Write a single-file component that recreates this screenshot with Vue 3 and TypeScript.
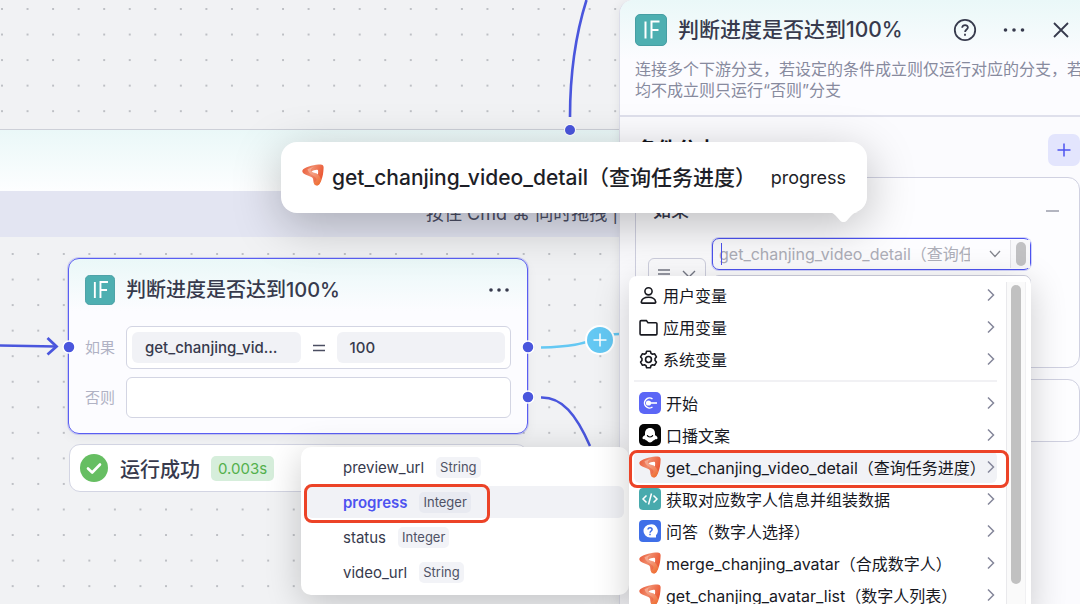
<script setup lang="ts">
import { ref } from 'vue'

interface MenuItem {
  label: string
  icon: 'user' | 'folder' | 'gear' | 'start' | 'copy' | 'plugin' | 'code' | 'ask'
  active?: boolean
}

interface Field {
  name: string
  type: string
}

const scopes: MenuItem[] = [
  { label: '用户变量', icon: 'user' },
  { label: '应用变量', icon: 'folder' },
  { label: '系统变量', icon: 'gear' },
]

const sources: MenuItem[] = [
  { label: '开始', icon: 'start' },
  { label: '口播文案', icon: 'copy' },
  { label: 'get_chanjing_video_detail（查询任务进度）', icon: 'plugin', active: true },
  { label: '获取对应数字人信息并组装数据', icon: 'code' },
  { label: '问答（数字人选择）', icon: 'ask' },
  { label: 'merge_chanjing_avatar（合成数字人）', icon: 'plugin' },
  { label: 'get_chanjing_avatar_list（数字人列表）', icon: 'plugin' },
]

const fields: Field[] = [
  { name: 'preview_url', type: 'String' },
  { name: 'progress', type: 'Integer' },
  { name: 'status', type: 'Integer' },
  { name: 'video_url', type: 'String' },
]

const selected = ref('progress')
</script>

<template>
  <div class="page">
    <svg class="defs" width="0" height="0" aria-hidden="true">
      <defs>
        <linearGradient id="plugA" x1="0" y1="0" x2="1" y2="0.4">
          <stop offset="0" stop-color="#e95735" />
          <stop offset="0.5" stop-color="#f08a6a" />
          <stop offset="1" stop-color="#eb5733" />
        </linearGradient>
        <linearGradient id="plugB" x1="0" y1="0" x2="0.5" y2="1">
          <stop offset="0" stop-color="#f8b9a4" />
          <stop offset="0.5" stop-color="#f4a084" />
          <stop offset="1" stop-color="#f07a3c" />
        </linearGradient>
        <symbol id="plugin" viewBox="0 0 22 22">
          <path d="M1.200 5.200C5 2.200 13 .5 18.500.5c2.400 0 3.300 1.200 3.100 3.500-.2 4.500-.8 8.500-2.200 12-1 2.600-2.200 5.400-4.300 5.400-2.600 0-3.600-2-3.800-4.600-.1-2.200-.6-3.200-2-3.800L3.300 10.600C.4 9.500-.6 6.800 1.200 5.200Z" fill="url(#plugA)" />
          <path d="M5.500 5.200c3-1.500 6-2.200 6-2.200-2 1.200-3 2.600-2.500 4 1.800 1.200 8.500 2 10.300 9-1 2.600-2.200 5.400-4.200 5.400-2.600 0-3.200-1.600-3.300-3 3-1.200 3.400-3.200 1.700-5C11.500 11.300 6.500 9.800 5.500 5.200Z" fill="url(#plugB)" opacity="0.8" />
          <path d="M9.600 7.500c1.500-1.300 5-2.100 6.200-1.500.6.600.4 2.900.1 4.400-1.300-1.300-4.300-1.400-6.300-2.900Z" fill="#fff" />
        </symbol>
      </defs>
    </svg>

    <main class="canvas">
      <svg class="dots" aria-hidden="true">
        <defs>
          <pattern id="grid" x="1" y="8" width="25.55" height="25.55" patternUnits="userSpaceOnUse">
            <circle cx="1" cy="1" r="0.900" fill="#a6a8ae" />
          </pattern>
        </defs>
        <rect width="100%" height="100%" fill="url(#grid)" />
      </svg>

      <section class="loop">
        <div class="loop-head"></div>
        <div class="loop-tip">按住 Cmd ⌘ 同时拖拽 |</div>
        <svg class="loop-body" aria-hidden="true">
          <defs>
            <pattern id="grid2" x="11.700" y="16" width="25.55" height="25.55" patternUnits="userSpaceOnUse">
              <circle cx="1" cy="1" r="0.900" fill="#a6a8ae" />
            </pattern>
          </defs>
          <rect width="100%" height="100%" fill="url(#grid2)" />
        </svg>
      </section>

      <svg class="edges" width="640" height="604" viewBox="0 0 640 604" fill="none" aria-hidden="true">
        <path d="M586.500 0C577 30 570 70 570 117" stroke="#4a56dd" stroke-width="2.600" />
        <circle cx="570" cy="130" r="6" fill="#fff" />
        <circle cx="570" cy="130" r="5" fill="#4a56dd" />
        <path d="M0 345.500 56 346.500" stroke="#4a56dd" stroke-width="2.500" />
        <path d="m47.500 338 9 8.500-9 8" stroke="#4a56dd" stroke-width="2.800" />
        <path d="M541 347.500C574 347 584 343 596 339S612 334 619 334" stroke="#64c8f3" stroke-width="2.500" />
        <path d="M541 397.500C562 397 576 414 590 446" stroke="#4a56dd" stroke-width="2.500" />
        <circle cx="600" cy="340" r="15" fill="#fff" />
        <circle cx="600" cy="340" r="13" fill="#64c8f3" />
        <path d="M593.500 340h13M600 333.500v13" stroke="#fff" stroke-width="1.500" />
      </svg>

      <div class="node-stack">
        <article class="node">
          <header class="node-head">
            <svg class="if-icon" viewBox="0 0 32 32" fill="none" aria-hidden="true">
              <rect x="0.500" y="0.500" width="31" height="31" rx="4.500" fill="#4eafb1" stroke="#479ea3" />
              <path d="M10.500 7.500v17M16.500 24.500v-17h8M16.500 16h7" stroke="#fff" stroke-width="2" />
            </svg>
            <h2>判断进度是否达到100%</h2>
            <button class="icon-btn" type="button" aria-label="更多">
              <svg width="22" height="6" viewBox="0 0 22 6" fill="#373a4d"><circle cx="3" cy="3" r="1.800" /><circle cx="11" cy="3" r="1.800" /><circle cx="19" cy="3" r="1.800" /></svg>
            </button>
          </header>
          <div class="branch">
            <span class="branch-name">如果</span>
            <div class="branch-box">
              <span class="pill">get_chanjing_vid…</span>
              <svg class="eq" width="12" height="8" viewBox="0 0 12 8" stroke="#4b4e62" stroke-width="1.300" aria-hidden="true"><path d="M0 1.500h12M0 6.500h12" /></svg>
              <span class="pill">100</span>
            </div>
          </div>
          <div class="branch">
            <span class="branch-name">否则</span>
            <div class="branch-box"></div>
          </div>
          <svg class="ports" width="472" height="176" viewBox="0 0 472 176" aria-hidden="true">
            <g fill="#4a56dd" stroke="#fff" stroke-width="1.500">
              <circle cx="7" cy="89" r="6" /><circle cx="466" cy="89" r="6" /><circle cx="466" cy="139" r="6" />
            </g>
          </svg>
        </article>
        <div class="result">
          <svg width="28" height="28" viewBox="0 0 28 28" fill="none" aria-hidden="true">
            <circle cx="14" cy="14" r="14" fill="#66be62" />
            <path d="m8 14.500 4.200 4 7.800-8" stroke="#fff" stroke-width="2.600" stroke-linecap="round" stroke-linejoin="round" />
          </svg>
          <strong>运行成功</strong>
          <span class="time">0.003s</span>
        </div>
      </div>
    </main>

    <aside class="panel">
      <div class="sheet">
        <header class="panel-head">
          <div class="title-row">
            <svg class="if-icon" viewBox="0 0 32 32" fill="none" aria-hidden="true">
              <rect x="0.500" y="0.500" width="31" height="31" rx="4.500" fill="#4eafb1" stroke="#479ea3" />
              <path d="M10.500 7.500v17M16.500 24.500v-17h8M16.500 16h7" stroke="#fff" stroke-width="2" />
            </svg>
            <h1>判断进度是否达到100%</h1>
            <div class="actions">
              <button class="icon-btn" type="button" aria-label="帮助">
                <svg width="24" height="24" viewBox="0 0 24 24" fill="none" stroke="#373a4d" stroke-width="1.800">
                  <circle cx="12" cy="12" r="10.200" />
                  <path d="M9.200 9.800c0-3.800 5.800-3.500 5.700-.2 0 2-2.800 2-2.800 4.400" /><path d="M12 15.800v2" />
                </svg>
              </button>
              <button class="icon-btn" type="button" aria-label="更多">
                <svg width="22" height="6" viewBox="0 0 22 6" fill="#373a4d"><circle cx="2.500" cy="3" r="1.800" /><circle cx="11" cy="3" r="1.800" /><circle cx="19.500" cy="3" r="1.800" /></svg>
              </button>
              <button class="icon-btn" type="button" aria-label="关闭">
                <svg width="16" height="16" viewBox="0 0 16 16" fill="none" stroke="#373a4d" stroke-width="1.800"><path d="m1 1 14 14M15 1 1 15" /></svg>
              </button>
            </div>
          </div>
          <p>连接多个下游分支，若设定的条件成立则仅运行对应的分支，若<br />均不成立则只运行“否则”分支</p>
        </header>

        <div class="section-head">
          <h3>条件分支</h3>
          <button class="add" type="button" aria-label="添加分支">
            <svg width="14" height="14" viewBox="0 0 14 14" stroke="#4d53f0" stroke-width="1.500"><path d="M7 0.500v13M0.500 7h13" /></svg>
          </button>
        </div>

        <section class="card first">
          <div class="card-head">
            <h4>如果</h4>
            <button class="icon-btn" type="button" aria-label="删除条件">
              <svg width="13" height="2" viewBox="0 0 13 2"><path d="M0 1h13" stroke="#9a9cab" stroke-width="1.500" /></svg>
            </button>
          </div>
          <div class="cond">
            <button class="operator" type="button" aria-label="等于">
              <svg width="42" height="12" viewBox="0 0 42 12" fill="none" stroke="#777a87" stroke-width="1.400"><path d="M2 2h12M2 6h12M2 10h12M27 3l6 6 6-6" /></svg>
            </button>
            <div class="operands">
              <label class="combo">
                <input type="text" aria-label="引用变量" placeholder="get_chanjing_video_detail（查询任务进度）" />
                <svg width="12" height="8" viewBox="0 0 12 8" fill="none" stroke="#85878f" stroke-width="1.300" aria-hidden="true"><path d="m1 1 5 5.500L11 1" /></svg>
                <span class="caret"></span>
                <span class="mini-track"><span class="mini-thumb"></span></span>
              </label>
              <div class="value-box"></div>
            </div>
          </div>
        </section>
        <section class="card second"></section>
      </div>

      <div class="submenu">
        <button
          v-for="f in fields"
          :key="f.name"
          type="button"
          class="field"
          :class="{ on: f.name === selected }"
          @click="selected = f.name"
        >
          <span>{{ f.name }}</span>
          <span class="tag">{{ f.type }}</span>
        </button>
        <span class="mark field-mark"></span>
      </div>

      <div class="menu">
        <div class="menu-list">
          <button v-for="s in scopes" :key="s.label" type="button" class="item scope">
            <svg v-if="s.icon === 'user'" class="line" viewBox="0 0 18 18"><circle cx="9" cy="5" r="3.400" /><path d="M3 16.200c-.6 0-1-.4-.8-1C2.600 12.200 5 10.600 9 10.600s6.400 1.600 6.800 4.600c.2.600-.2 1-.8 1Z" /></svg>
            <svg v-else-if="s.icon === 'folder'" class="line" viewBox="0 0 18 18"><path d="M1 3.500c0-.6.300-1 1-1h5l1.500 2H16c.6 0 1 .4 1 1v9.500c0 .6-.4 1-1 1H2c-.6 0-1-.4-1-1Z" /></svg>
            <svg v-else class="line" viewBox="0 0 18 18"><circle cx="9" cy="9" r="2.800" /><path d="m7.200 1.200-.5 1.900-1.500.9-1.900-.5L1.500 6.600l1.300 1.500v1.800l-1.300 1.500 1.800 3.100 1.900-.5 1.500.9.500 1.900h3.600l.5-1.900 1.500-.9 1.900.5 1.800-3.100-1.300-1.500V8.100l1.300-1.500-1.800-3.100-1.900.5-1.500-.9-.5-1.900Z" stroke-linejoin="round" /></svg>
            <span class="label">{{ s.label }}</span>
            <svg class="chev" viewBox="0 0 8 14"><path d="m1 1.500 5.500 5.500L1 12.500" /></svg>
          </button>
          <hr />
          <button v-for="s in sources" :key="s.label" type="button" class="item" :class="{ active: s.active }">
            <svg v-if="s.icon === 'start'" class="pic" viewBox="0 0 22 22" fill="none"><rect width="22" height="22" rx="5" fill="#5b66f6" /><path d="M13.500 7A5 5 0 1 0 13.500 15" stroke="#fff" stroke-width="1.500" /><circle cx="9.500" cy="11" r="2.600" fill="#fff" /><path d="M10 11h8" stroke="#fff" stroke-width="1.600" /></svg>
            <svg v-else-if="s.icon === 'copy'" class="pic" viewBox="0 0 22 22" fill="none"><rect width="22" height="22" rx="5" fill="#050505" /><path d="M11 4c3.300 0 5 2.400 5 5.600v1.600c1.500.6 2.600 1.700 2.500 3-.1 1-1.300 1.200-2.500 1-.4 1.300-1.500 1-2.300 1.800-.6.700-1.400 1.400-2.700 1.400s-2.100-.7-2.700-1.400C7.500 16.200 6.400 16.500 6 15.200c-1.200.2-2.400 0-2.500-1-.1-1.300 1-2.400 2.500-3V9.600C6 6.400 7.700 4 11 4Z" fill="#fff" /><path d="M8.200 11.200c.7 2.400 4.900 2.400 5.600 0" stroke="#050505" stroke-width="1.200" /></svg>
            <svg v-else-if="s.icon === 'code'" class="pic" viewBox="0 0 22 22" fill="none" stroke="#fff" stroke-width="1.500"><rect width="22" height="22" rx="4" fill="#48aaad" stroke="none" /><path d="m7.500 7.500-3.500 3.500 3.500 3.500M14.500 7.500l3.500 3.500-3.500 3.500M12.500 5.500l-3 11" /></svg>
            <svg v-else-if="s.icon === 'ask'" class="pic" viewBox="0 0 22 22" fill="none"><rect width="22" height="22" rx="4" fill="#3f6fe8" /><path d="M11 4.500a6.500 6.500 0 1 0 0 13h6v-2.200A6.500 6.500 0 0 0 11 4.500Z" fill="#fff" /><path d="M9 9.600c0-2.700 4.100-2.500 4.100 0 0 1.400-2 1.500-2 3.100M11 13.700v1.500" stroke="#3f6fe8" stroke-width="1.500" /></svg>
            <svg v-else class="pic"><use href="#plugin" /></svg>
            <span class="label">{{ s.label }}</span>
            <svg class="chev" viewBox="0 0 8 14"><path d="m1 1.500 5.500 5.500L1 12.500" /></svg>
          </button>
        </div>
        <div class="track"><div class="thumb"></div></div>
        <span class="mark item-mark"></span>
      </div>

      <div class="tooltip" role="tooltip">
        <svg class="tip-logo"><use href="#plugin" /></svg>
        <strong>get_chanjing_video_detail（查询任务进度）</strong>
        <span>progress</span>
        <svg class="arrow" width="34" height="11" viewBox="0 0 34 11" aria-hidden="true"><path d="M0 0h34c-6 0-8 2.500-13 8.500-2 2-5 2-7 0C9 2.500 7 0 0 0Z" fill="#fff" /></svg>
      </div>
    </aside>
  </div>
</template>

<style>
body {
  margin: 0;
}
</style>

<style scoped>
.page {
  position: relative;
  display: flex;
  height: 100vh;
  overflow: hidden;
  background: #f1f2f4;
  color: #373a4d;
  font-family: Inter, "Noto Sans CJK SC", sans-serif;
}
* {
  box-sizing: border-box;
}
h1, h2, h3, h4, p {
  margin: 0;
}
button {
  font: inherit;
  color: inherit;
  border: 0;
  background: none;
  padding: 0;
  cursor: pointer;
}
svg {
  display: block;
  flex: none;
}
.defs {
  position: absolute;
}
.icon-btn {
  display: flex;
}

/* canvas */
.canvas {
  position: relative;
  flex: 1;
  min-width: 0;
}
.dots, .edges {
  position: absolute;
  left: 0;
  top: 0;
}
.dots {
  width: 100%;
  height: 100%;
}
.loop {
  position: absolute;
  left: 0;
  right: 0;
  top: 129px;
  bottom: 0;
  display: flex;
  flex-direction: column;
  border-top: 1px solid #cdd0d8;
  background: #f1f2f4;
}
.loop-head {
  height: 61px;
  background: linear-gradient(#eaf8f8, #fdfeff);
}
.loop-tip {
  height: 46px;
  padding-left: 426px;
  line-height: 46px;
  background: #e3e5f2;
  color: #4c4f66;
  font-size: 18px;
  white-space: nowrap;
}
.loop-body {
  width: 100%;
  flex: 1;
}
.node-stack {
  position: absolute;
  left: 68px;
  top: 258px;
  width: 460px;
  display: flex;
  flex-direction: column;
  gap: 10px;
}
.node {
  position: relative;
  height: 176px;
  padding: 15px 16px;
  display: flex;
  flex-direction: column;
  gap: 8px;
  border: 1px solid #5a5ef2;
  border-radius: 11px;
  background: linear-gradient(#eaf8f8, #fcfcff 52px);
  box-shadow: 0 0 0 1px rgba(90, 94, 242, 0.25), 0 4px 12px rgba(0, 0, 0, 0.05);
}
.node-head {
  display: flex;
  align-items: center;
  height: 32px;
  margin-bottom: 12px;
  padding-right: 1px;
}
.if-icon {
  width: 32px;
  height: 32px;
}
.node-head .if-icon {
  width: 30px;
  height: 30px;
}
h2 {
  flex: 1;
  margin-left: 11px;
  font-size: 20px;
  line-height: 30px;
  font-weight: 500;
}
.branch {
  display: flex;
  align-items: center;
}
.branch-name {
  width: 41px;
  font-size: 15px;
  line-height: 22px;
  color: #b0b2c4;
}
.branch-box {
  flex: 1;
  display: flex;
  align-items: center;
  gap: 12px;
  min-height: 41px;
  padding: 5px;
  border: 1px solid #d3d5e3;
  border-radius: 6px;
  background: #fff;
}
.pill {
  flex: 1;
  padding-left: 13px;
  border-radius: 6px;
  background: #f1f2f6;
  font-size: 15px;
  line-height: 31px;
  font-weight: 500;
  white-space: nowrap;
}
.ports {
  position: absolute;
  left: -7px;
  top: -1px;
}
.result {
  display: flex;
  align-items: center;
  height: 48px;
  margin-left: 1px;
  padding-left: 10px;
  border: 1px solid #d3d5e3;
  border-radius: 11px;
  background: #fff;
}
.result strong {
  margin-left: 12px;
  font-size: 20px;
  font-weight: 500;
}
.time {
  margin-left: 11px;
  padding: 0 7px;
  border-radius: 5px;
  background: #d6eedb;
  color: #53b04c;
  font-size: 15px;
  line-height: 25px;
}

/* right panel */
.panel {
  position: relative;
  flex: 0 0 461px;
  min-width: 0;
}
.sheet {
  height: 100%;
  border-left: 1px solid #dcdde9;
  border-radius: 14px 0 0 0;
  background: #fbfbfe;
  box-shadow: -2px 0 10px rgba(0, 0, 0, 0.05);
  overflow: hidden;
}
.panel-head {
  height: 117px;
  padding: 14px 11px 0 15px;
  border-bottom: 2px solid #dfe0ec;
  background: linear-gradient(#eaf8f8, #fcfcff 60px);
}
.title-row {
  display: flex;
  align-items: center;
}
h1 {
  margin-left: 11px;
  font-size: 21px;
  line-height: 32px;
  font-weight: 500;
}
.actions {
  display: flex;
  align-items: center;
  gap: 26px;
  margin-left: auto;
}
.actions .icon-btn:last-child {
  margin-left: 2px;
}
.panel-head p {
  margin-top: 13px;
  font-size: 16px;
  line-height: 21px;
  color: #878a9e;
  white-space: nowrap;
}
.section-head {
  display: flex;
  align-items: center;
  justify-content: space-between;
  padding: 17px 0 11px 17px;
}
h3 {
  font-size: 20px;
  line-height: 32px;
  font-weight: 700;
  color: #14151c;
}
.add {
  display: grid;
  place-items: center;
  width: 32px;
  height: 32px;
  border-radius: 7px;
  background: #e3e5fd;
}
.card {
  margin-left: 15px;
  border: 1px solid #d0d1e1;
  border-radius: 12px;
  background: #fdfdff;
}
.first {
  min-height: 191px;
  padding: 20px 20px 0 12px;
}
.card-head {
  display: flex;
  align-items: center;
  justify-content: space-between;
  padding-left: 5px;
}
h4 {
  font-size: 18px;
  line-height: 26px;
  font-weight: 500;
}
.cond {
  display: flex;
  gap: 6px;
  margin: 14px 28px 0 0;
}
.operator {
  width: 58px;
  height: 32px;
  margin-top: 20px;
  padding-left: 7px;
  border: 1px solid #cfd0df;
  border-radius: 6px;
}
.operands {
  flex: 1;
  min-width: 0;
}
.combo {
  position: relative;
  display: flex;
  align-items: center;
  height: 32px;
  padding-left: 6px;
  border: 1px solid #4d53f0;
  border-radius: 7px;
  box-shadow: 0 0 0 1px rgba(77, 83, 240, 0.25);
}
.combo input {
  width: 251px;
  margin-right: 19px;
  padding: 0;
  border: 0;
  outline: 0;
  background: none;
  font: 16px/24px Inter, "Noto Sans CJK SC", sans-serif;
}
.combo input::placeholder {
  color: #aeafb9;
  opacity: 1;
}
.caret {
  position: absolute;
  left: 8px;
  top: 4px;
  width: 1px;
  height: 22px;
  background: #4d53f0;
}
.mini-track {
  display: flex;
  justify-content: center;
  width: 20px;
  height: 28px;
  padding: 2px 0;
  margin-left: auto;
  border-left: 1px solid #e4e4e8;
  background: #f8f8fa;
}
.mini-thumb {
  width: 10px;
  border-radius: 5px;
  background: #c1c1c3;
}
.value-box {
  height: 32px;
  margin-top: 5px;
  border: 1px solid #cfd0df;
  border-radius: 7px;
}
.second {
  height: 63px;
  margin-top: 11px;
}

/* field list */
.submenu {
  position: absolute;
  left: -318px;
  top: 447px;
  width: 328px;
  padding: 4px 5px 7px;
  display: flex;
  flex-direction: column;
  gap: 3px;
  border-radius: 10px;
  background: #fff;
  box-shadow: 0 8px 36px rgba(0, 0, 0, 0.2);
}
.field {
  display: flex;
  align-items: center;
  gap: 12px;
  height: 32px;
  padding-left: 37px;
  border-radius: 6px;
  font-size: 15px;
}
.field.on {
  background: #f1f2f6;
}
.field.on > span:first-child {
  color: #4d53f0;
  font-weight: 600;
}
.tag {
  padding: 0 4px;
  border-radius: 5px;
  background: #f2f3f7;
  color: #4f5265;
  font-size: 13px;
  line-height: 21px;
}
.on .tag {
  background: #e8eaf1;
}
.mark {
  position: absolute;
  border: 3px solid #ec4327;
  border-radius: 8px;
  pointer-events: none;
}
.field-mark {
  left: 3px;
  top: 37px;
  width: 186px;
  height: 39px;
}

/* variable source menu */
.menu {
  position: absolute;
  left: 10px;
  top: 276px;
  width: 402px;
  display: flex;
  border-radius: 8px 8px 0 0;
  background: #fff;
  box-shadow: 0 8px 36px rgba(0, 0, 0, 0.2);
}
.menu-list {
  flex: 1;
  min-width: 0;
  padding: 3px 9px 4px 5px;
}
.item {
  display: flex;
  align-items: center;
  gap: 5px;
  width: 100%;
  height: 32px;
  padding: 0 2px 0 5px;
  border-radius: 6px;
  color: #17181f;
  font-size: 16px;
  white-space: nowrap;
  text-align: left;
}
.item.active {
  background: #f1f2f6;
}
.label {
  flex: 1;
  min-width: 0;
}
hr {
  height: 2px;
  margin: 5px 0;
  border: 0;
  background: #f1f1f4;
}
.pic {
  width: 22px;
  height: 22px;
}
.line {
  width: 19px;
  height: 19px;
  fill: none;
  stroke: #17181f;
  stroke-width: 1.5;
}
.chev {
  width: 8px;
  height: 14px;
  fill: none;
  stroke: #84879a;
  stroke-width: 1.5;
}
.track {
  width: 20px;
  margin: 6px 5px 0 0;
  padding: 3px 4px 0;
  background: #fafafa;
  border-left: 1px solid #e9e9ec;
  border-right: 1px solid #f0f0f2;
}
.thumb {
  height: 299px;
  border-radius: 5px;
  background: #c1c1c1;
}
.item-mark {
  left: 0;
  top: 174px;
  width: 380px;
  height: 38px;
}

/* hover card */
.tooltip {
  position: absolute;
  left: -338px;
  top: 142px;
  width: 586px;
  height: 71px;
  padding: 0 21px;
  display: flex;
  align-items: center;
  border-radius: 16px;
  background: #fff;
  color: #1d1e27;
  white-space: nowrap;
  box-shadow: 0 12px 48px rgba(0, 0, 0, 0.26);
}
.tip-logo {
  width: 22px;
  height: 22px;
  margin: 0 8px 6px 0;
}
.tooltip strong {
  font-size: 21px;
  line-height: 30px;
  font-weight: 500;
}
.tooltip span {
  margin-left: auto;
  font-size: 18px;
}
.arrow {
  position: absolute;
  right: 7px;
  top: 70px;
}
</style>
